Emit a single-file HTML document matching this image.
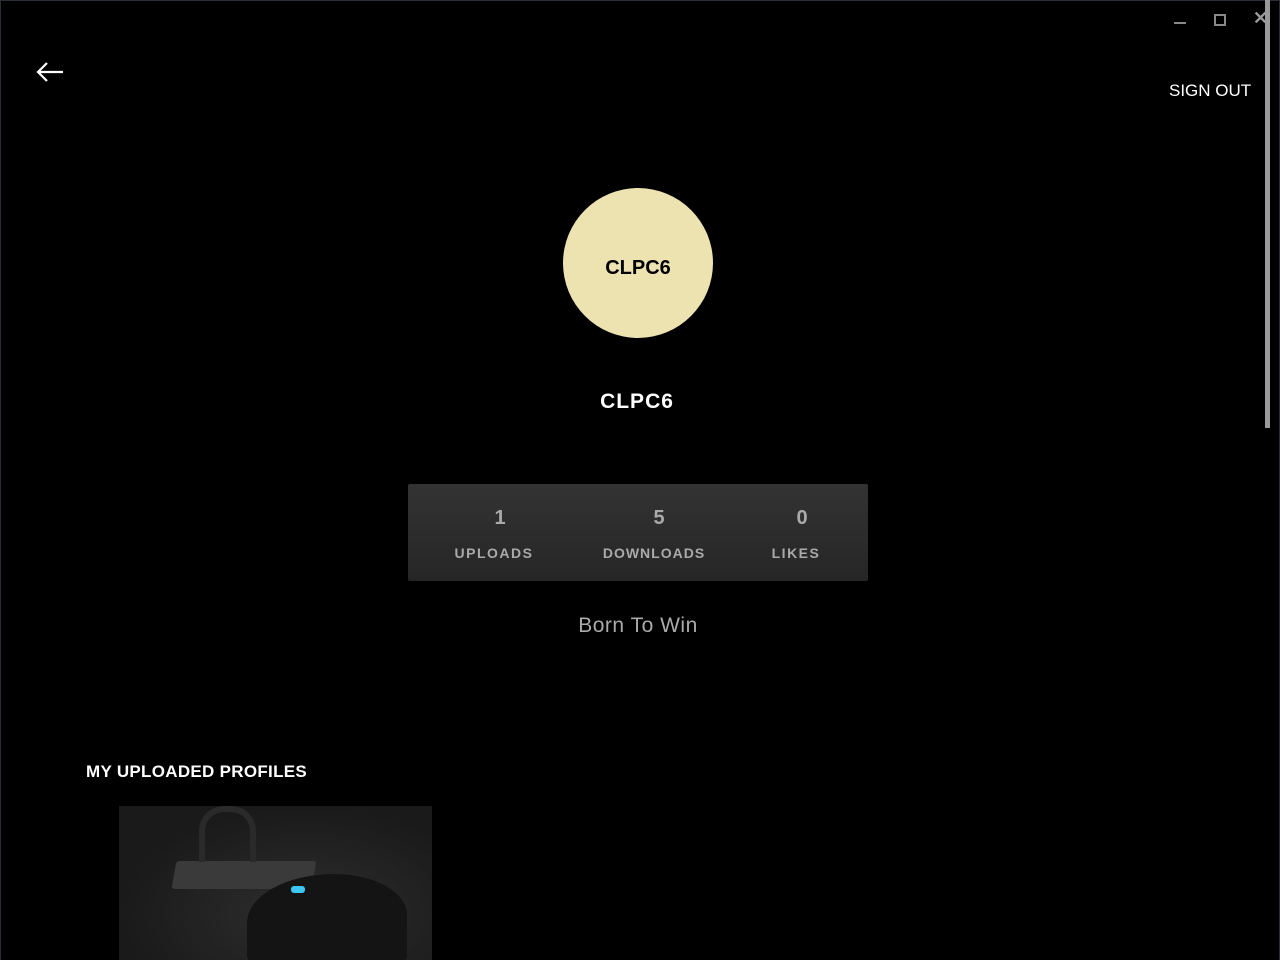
<!DOCTYPE html>
<html><head><style>
body{margin:0;width:1280px;height:960px;background:#000;overflow:hidden;position:relative;font-family:"Liberation Sans",sans-serif;color:#fff}
.a{position:absolute}
</style></head><body>
<div class="a" style="left:0;top:0;width:1280px;height:960px;box-sizing:border-box;border:1px solid #2a2e36;border-bottom:none"></div>
<div class="a" style="left:1265px;top:0;width:5px;height:428px;background:#9a9a9a"></div>
<div class="a" style="left:1174px;top:22px;width:12px;height:2px;background:#888"></div>
<div class="a" style="left:1214px;top:14px;width:8px;height:8px;border:2px solid #888"></div>
<div class="a" style="left:1253px;top:8px;color:#999;font-size:18px;font-weight:bold">✕</div>
<svg class="a" style="left:34px;top:60px" width="32" height="24"><path d="M29 12H4M13 3L4 12l9 9" stroke="#fff" stroke-width="2.2" fill="none"/></svg>
<div class="a" style="left:1169px;top:81px;font-size:17px">SIGN OUT</div>
<div class="a" style="left:563px;top:188px;width:150px;height:150px;border-radius:50%;background:#ede3b1;color:#000;font-weight:bold;font-size:20px;line-height:160px;text-align:center">CLPC6</div>
<div class="a" style="left:0;width:1274px;top:390px;text-align:center;font-weight:bold;font-size:21px;letter-spacing:1px">CLPC6</div>
<div class="a" style="left:408px;top:484px;width:460px;height:97px;background:linear-gradient(#333,#262626);border-radius:2px;color:#aaa;font-weight:bold">
<div class="a" style="left:0;width:184px;top:23px;text-align:center;font-size:20px">1</div>
<div class="a" style="left:0;width:172px;top:61px;text-align:center;font-size:14px;letter-spacing:1.5px">UPLOADS</div>
<div class="a" style="left:175px;width:152px;top:23px;text-align:center;font-size:20px">5</div>
<div class="a" style="left:170px;width:152px;top:61px;text-align:center;font-size:14px;letter-spacing:1px">DOWNLOADS</div>
<div class="a" style="left:340px;width:108px;top:23px;text-align:center;font-size:20px">0</div>
<div class="a" style="left:340px;width:96px;top:61px;text-align:center;font-size:14px;letter-spacing:1.5px">LIKES</div>
</div>
<div class="a" style="left:0;width:1276px;top:614px;text-align:center;font-size:21px;color:#aaa;letter-spacing:.5px">Born To Win</div>
<div class="a" style="left:86px;top:762px;font-size:17px;font-weight:bold;letter-spacing:.3px">MY UPLOADED PROFILES</div>
<div class="a" style="left:119px;top:806px;width:313px;height:154px;overflow:hidden;background:radial-gradient(ellipse at 60% 70%,#2e2e2e,#1a1a1a 70%)">
<div class="a" style="left:55px;top:55px;width:140px;height:28px;background:#3a3a3a;transform:skewX(-10deg);border-radius:3px"></div>
<div class="a" style="left:80px;top:0;width:45px;height:50px;border:6px solid #2a2a2a;border-bottom:none;border-radius:25px 25px 0 0"></div>
<div class="a" style="left:128px;top:68px;width:160px;height:90px;background:#141414;border-radius:60% 50% 10% 10%"></div>
<div class="a" style="left:172px;top:80px;width:14px;height:7px;background:#3cc6f0;border-radius:3px"></div>
</div>
</body></html>
